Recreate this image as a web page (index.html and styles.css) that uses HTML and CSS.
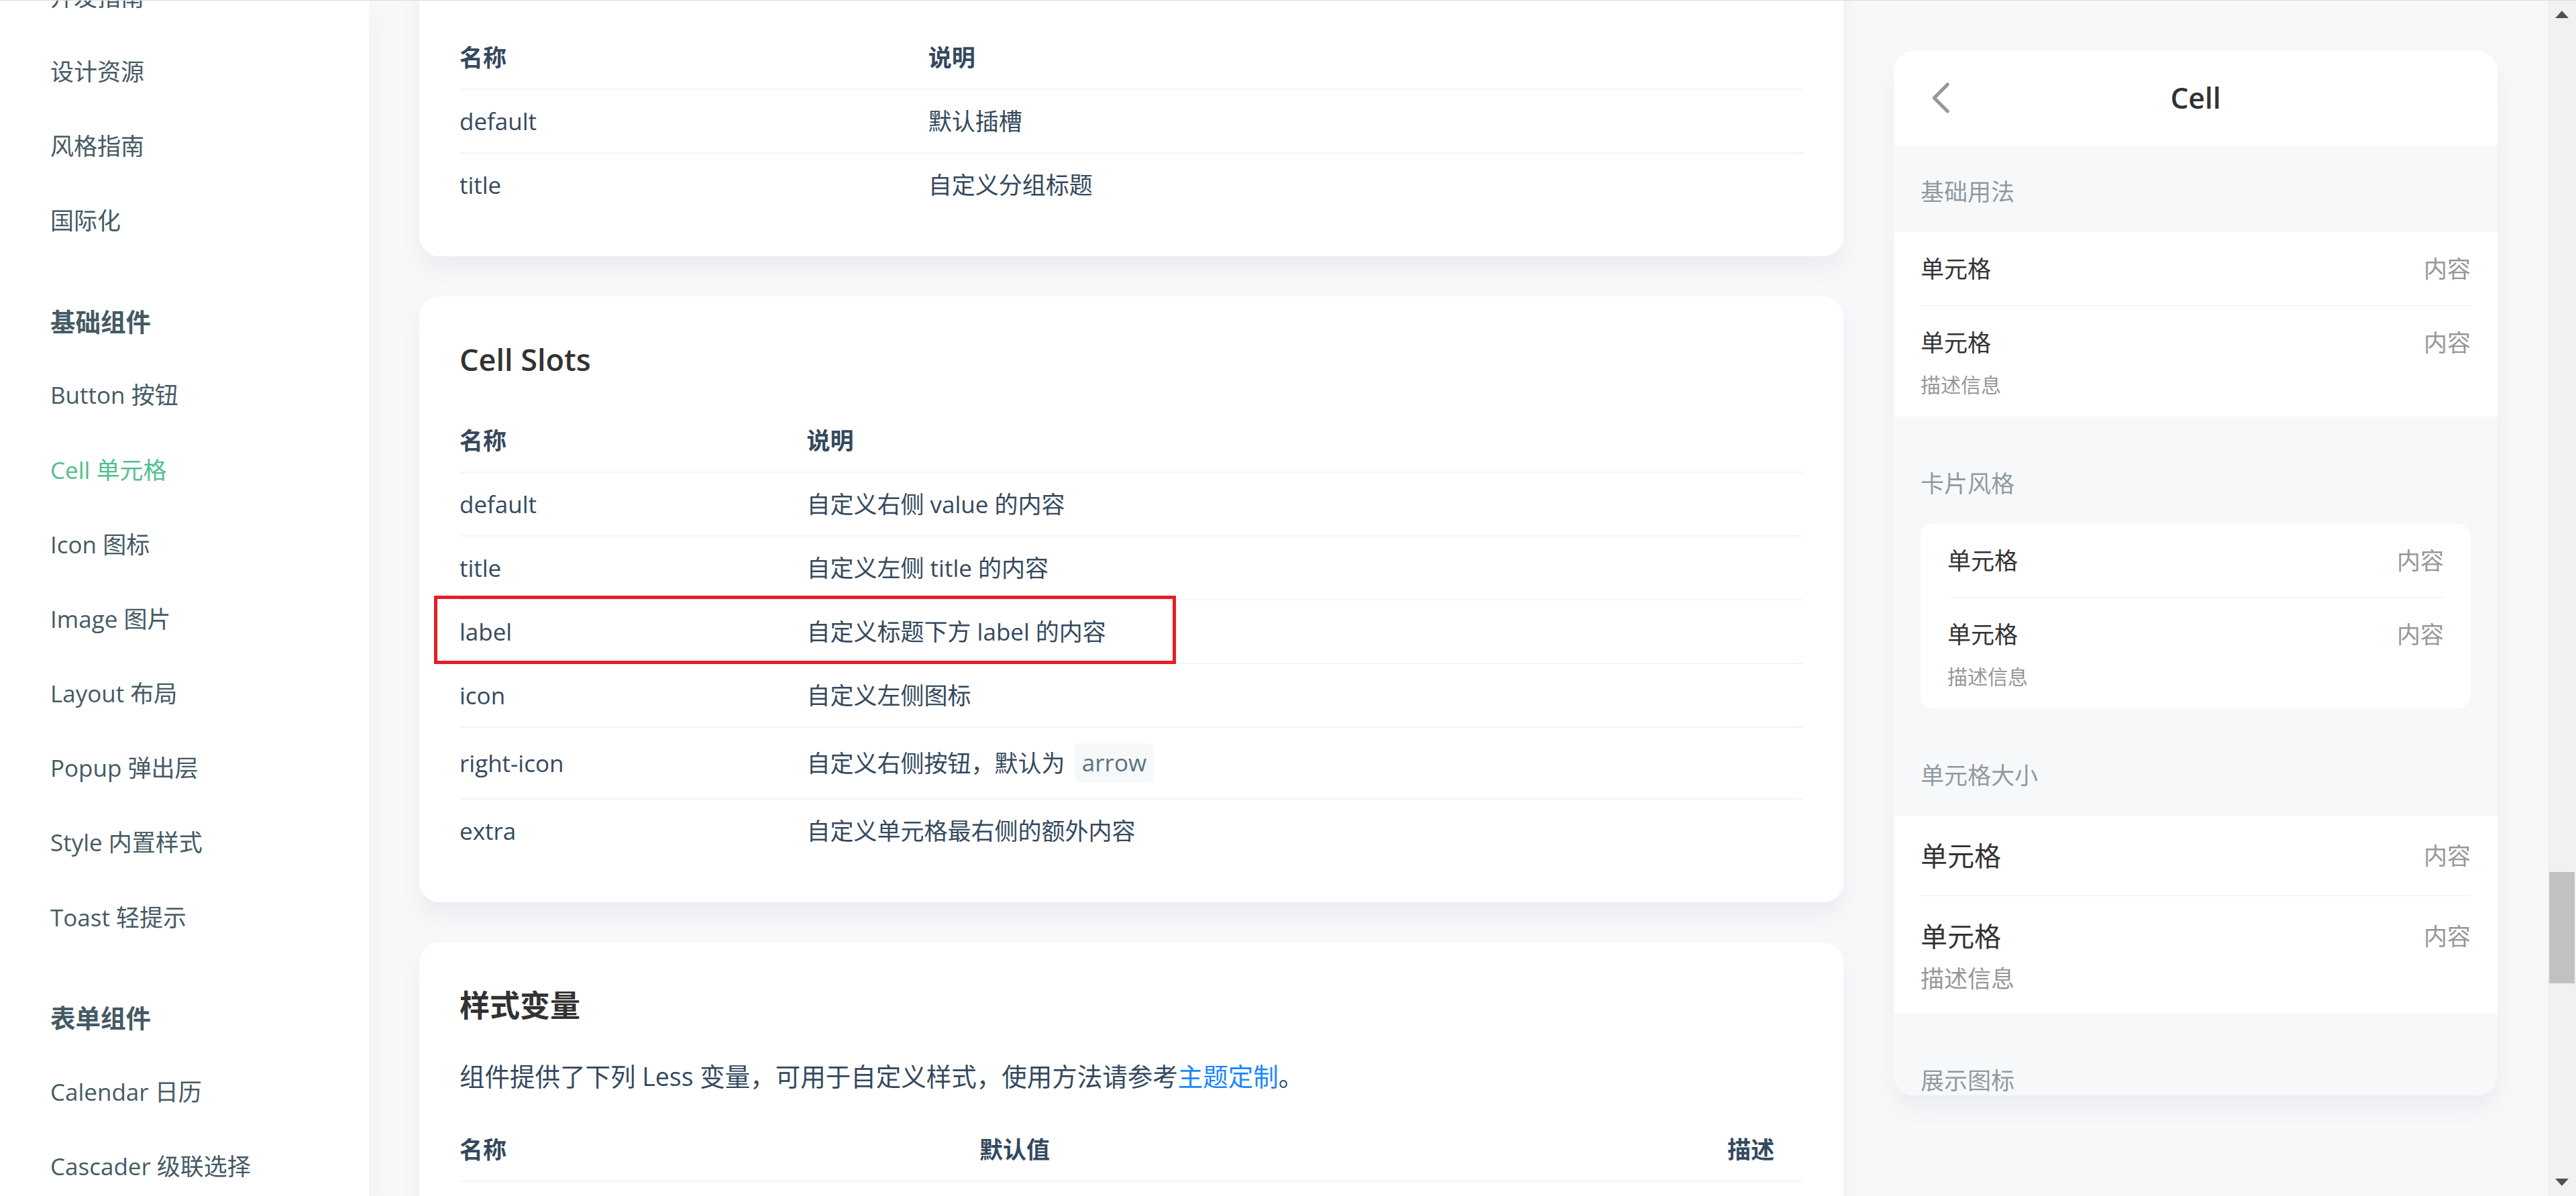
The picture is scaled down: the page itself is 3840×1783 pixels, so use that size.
FILE: index.html
```html
<!DOCTYPE html>
<html lang="zh-CN">
<head>
<meta charset="utf-8">
<title>Cell 单元格 - Vant</title>
<link rel="stylesheet" href="styles.css">
</head>
<body>
<div class="app">
  <div class="topline"></div>

  <aside class="nav">
    <div class="nav-list">
      <div class="nav-group">
        <a class="nav-item" href="#">开发指南</a>
        <a class="nav-item" href="#">设计资源</a>
        <a class="nav-item" href="#">风格指南</a>
        <a class="nav-item" href="#">国际化</a>
      </div>
      <div class="nav-group">
        <div class="nav-title">基础组件</div>
        <a class="nav-item" href="#">Button 按钮</a>
        <a class="nav-item active" href="#">Cell 单元格</a>
        <a class="nav-item" href="#">Icon 图标</a>
        <a class="nav-item" href="#">Image 图片</a>
        <a class="nav-item" href="#">Layout 布局</a>
        <a class="nav-item" href="#">Popup 弹出层</a>
        <a class="nav-item" href="#">Style 内置样式</a>
        <a class="nav-item" href="#">Toast 轻提示</a>
      </div>
      <div class="nav-group">
        <div class="nav-title">表单组件</div>
        <a class="nav-item" href="#">Calendar 日历</a>
        <a class="nav-item" href="#">Cascader 级联选择</a>
        <a class="nav-item" href="#">Checkbox 复选框</a>
      </div>
    </div>
  </aside>

  <main class="content">
    <section class="card">
      <h3>CellGroup Slots</h3>
      <table class="doc-table">
        <colgroup><col class="c-cg"><col></colgroup>
        <thead><tr><th>名称</th><th>说明</th></tr></thead>
        <tbody>
          <tr><td>default</td><td>默认插槽</td></tr>
          <tr><td>title</td><td>自定义分组标题</td></tr>
        </tbody>
      </table>
    </section>

    <section class="card">
      <h3>Cell Slots</h3>
      <table class="doc-table">
        <colgroup><col class="c-cs"><col></colgroup>
        <thead><tr><th>名称</th><th>说明</th></tr></thead>
        <tbody>
          <tr><td>default</td><td>自定义右侧 value 的内容</td></tr>
          <tr><td>title</td><td>自定义左侧 title 的内容</td></tr>
          <tr><td>label</td><td>自定义标题下方 label 的内容</td></tr>
          <tr><td>icon</td><td>自定义左侧图标</td></tr>
          <tr><td>right-icon</td><td>自定义右侧按钮，默认为 <code>arrow</code></td></tr>
          <tr><td>extra</td><td>自定义单元格最右侧的额外内容</td></tr>
        </tbody>
      </table>
      <div class="mark"></div>
    </section>

    <section class="card">
      <h3>样式变量</h3>
      <p>组件提供了下列 Less 变量，可用于自定义样式，使用方法请参考<a href="#">主题定制</a>。</p>
      <table class="doc-table">
        <colgroup><col class="c-v1"><col><col class="c-v3"></colgroup>
        <thead><tr><th>名称</th><th>默认值</th><th>描述</th></tr></thead>
        <tbody>
          <tr><td>--van-cell-font-size</td><td>var(--van-font-size-md)</td><td>-</td></tr>
          <tr><td>--van-cell-line-height</td><td>24px</td><td>-</td></tr>
        </tbody>
      </table>
    </section>
  </main>

  <div class="sim-col">
    <div class="sim">
      <div class="demo-nav">
        <svg class="demo-back" viewBox="0 0 1000 1000" aria-hidden="true"><path d="M296.114 508.035c-3.22-13.597.473-28.499 11.079-39.105l333.912-333.912c16.271-16.272 42.653-16.272 58.925 0s16.272 42.654 0 58.926L395.504 498.47l304.574 304.574c16.272 16.272 16.272 42.654 0 58.926s-42.654 16.272-58.926 0L307.241 528.058a41.472 41.472 0 0 1-11.127-20.023z"/></svg>
        <div class="demo-title">Cell</div>
      </div>
      <div class="demo-body">
        <div class="demo-block first">
          <h2 class="block-title">基础用法</h2>
          <div class="cell-group">
            <div class="cell"><div class="cell-title"><span>单元格</span></div><div class="cell-value">内容</div></div>
            <div class="cell"><div class="cell-title"><span>单元格</span><div class="cell-label">描述信息</div></div><div class="cell-value">内容</div></div>
          </div>
        </div>
        <div class="demo-block">
          <h2 class="block-title">卡片风格</h2>
          <div class="cell-group inset">
            <div class="cell"><div class="cell-title"><span>单元格</span></div><div class="cell-value">内容</div></div>
            <div class="cell"><div class="cell-title"><span>单元格</span><div class="cell-label">描述信息</div></div><div class="cell-value">内容</div></div>
          </div>
        </div>
        <div class="demo-block">
          <h2 class="block-title">单元格大小</h2>
          <div class="cell-group">
            <div class="cell large"><div class="cell-title"><span>单元格</span></div><div class="cell-value">内容</div></div>
            <div class="cell large"><div class="cell-title"><span>单元格</span><div class="cell-label">描述信息</div></div><div class="cell-value">内容</div></div>
          </div>
        </div>
        <div class="demo-block">
          <h2 class="block-title">展示图标</h2>
          <div class="cell-group">
            <div class="cell"><div class="cell-title"><span>单元格</span></div><div class="cell-value">内容</div></div>
          </div>
        </div>
      </div>
    </div>
  </div>

  <div class="scrollbar">
    <div class="sb-btn"><svg class="sb-arrow" viewBox="0 0 8 4.4"><polygon points="0,4.4 4,0 8,4.4"/></svg></div>
    <div class="sb-track"><div class="sb-thumb"></div></div>
    <div class="sb-btn"><svg class="sb-arrow" viewBox="0 0 8 4.4"><polygon points="0,0 8,0 4,4.4"/></svg></div>
  </div>
</div>
</body>
</html>
```

FILE: styles.css
```css
html {
  zoom: 2.5;
}

body {
  margin: 0;
  background: #f7f8fa;
  font-family: "Open Sans", "Noto Sans CJK SC", sans-serif;
  overflow: hidden;
}

.app {
  position: relative;
  display: flex;
  height: 713.2px;
  overflow: hidden;
  background: #f7f8fa;
}

.topline {
  position: absolute;
  left: 0;
  right: 0;
  top: 0;
  border-top: 0.4px solid #d9dbde;
  z-index: 10;
}

/* ---------- sidebar ---------- */
.nav {
  flex: none;
  width: 220px;
  background: #fff;
  box-shadow: 0 8px 12px #ebedf0;
  position: relative;
  z-index: 2;
  overflow: hidden;
}

.nav-list {
  margin-top: -24.2px;
}

.nav-group + .nav-group {
  margin-top: 16.66px;
}

.nav-title {
  padding: 8px 0 8px 30px;
  font-size: 15px;
  line-height: 27px;
  font-weight: 600;
  color: #455a64;
}

.nav-item {
  display: block;
  padding: 12px 0 12px 30px;
  font-size: 14px;
  line-height: 20.47px;
  color: #455a64;
  text-decoration: none;
}

.nav-item.active {
  color: #4fc08d;
}

/* ---------- content ---------- */
.content {
  flex: 1;
  min-width: 0;
  padding: 0 0 0 30px;
}

.card {
  position: relative;
  margin-bottom: 24px;
  padding: 24px;
  background: #fff;
  border-radius: 12px;
  box-shadow: 0 8px 12px #ebedf0;
}

.card:first-child {
  margin-top: -51.4px;
}

.card h3 {
  margin: 0 0 16px;
  font-size: 18px;
  line-height: 27px;
  font-weight: 600;
  color: #323233;
}

.card p {
  margin: 16px 0 12px;
  font-size: 15px;
  line-height: 26px;
  color: #34495e;
}

.card p a {
  color: #1989fa;
  text-decoration: none;
}

.doc-table {
  width: 100%;
  margin-top: 12px;
  table-layout: fixed;
  border-collapse: collapse;
  font-size: 14px;
  line-height: 21.2px;
  color: #34495e;
}

.doc-table th {
  padding: 8px 16px;
  text-align: left;
  font-weight: 600;
}

.doc-table td {
  padding: 8px 16px;
  border-top: 1px solid #f1f4f8;
  white-space: nowrap;
}

.doc-table th:first-child,
.doc-table td:first-child {
  padding-left: 0;
}

.c-cg { width: 263.5px; }
.c-cs { width: 191px; }
.c-v1 { width: 294px; }
.c-v3 { width: 61.2px; }

.doc-table code {
  display: inline-block;
  margin: 1.5px 2px;
  padding: 0 4.5px;
  font-family: "Open Sans", "Noto Sans CJK SC", sans-serif;
  font-size: 14px;
  line-height: 23px;
  color: #58727e;
  background: #f7f8fa;
  border-radius: 3px;
}

.mark {
  position: absolute;
  left: 8.8px;
  top: 178.2px;
  width: 442.4px;
  height: 40.8px;
  box-sizing: border-box;
  border: 2.2px solid #e71d25;
  pointer-events: none;
}

/* ---------- simulator ---------- */
.sim-col {
  flex: none;
  width: 360px;
  margin: 0 30px;
  padding-top: 30.4px;
}

.sim {
  height: 622.6px;
  border-radius: 12px;
  overflow: hidden;
  background: #f7f8fa;
  box-shadow: 0 8px 12px #ebedf0;
}

.demo-nav {
  position: relative;
  height: 56px;
  background: #fff;
  text-align: center;
}

.demo-back {
  position: absolute;
  left: 16px;
  top: 16px;
  width: 24px;
  height: 24px;
  fill: #969799;
}

.demo-title {
  font-size: 17px;
  line-height: 56px;
  font-weight: 600;
  color: #323233;
}

.block-title {
  margin: 0;
  padding: 32px 16px 16px;
  font-size: 14px;
  line-height: 16px;
  font-weight: 400;
  color: rgba(69, 90, 100, 0.6);
}

.demo-block.first .block-title {
  padding-top: 20px;
}

.cell-group {
  background: #fff;
}

.cell-group.inset {
  margin: 0 16px;
  border-radius: 8px;
  overflow: hidden;
}

.cell {
  position: relative;
  display: flex;
  padding: 10px 16px;
  font-size: 14px;
  line-height: 24px;
  color: #323233;
  background: #fff;
}

.cell:not(:last-child)::after {
  content: "";
  position: absolute;
  left: 16px;
  right: 16px;
  bottom: 0;
  border-bottom: 0.5px solid #ebedf0;
}

.cell-title {
  flex: 1;
}

.cell-value {
  flex: 1;
  text-align: right;
  color: #969799;
}

.cell-label {
  margin-top: 4px;
  font-size: 12px;
  line-height: 18px;
  color: #969799;
}

.cell.large {
  padding-top: 12px;
  padding-bottom: 12px;
}

.cell.large .cell-title {
  font-size: 16px;
}

.cell.large .cell-label {
  font-size: 14px;
}

/* ---------- scrollbar ---------- */
.scrollbar {
  flex: none;
  width: 16.8px;
  display: flex;
  flex-direction: column;
  background: #f1f1f1;
}

.sb-btn {
  flex: none;
  height: 16.8px;
  display: flex;
  align-items: center;
  justify-content: center;
}

.sb-arrow {
  width: 8px;
  height: 4.4px;
  fill: #505050;
}

.sb-track {
  flex: 1;
  position: relative;
}

.sb-thumb {
  position: absolute;
  left: 0.8px;
  right: 0.8px;
  top: 503.2px;
  height: 66.4px;
  background: #c1c1c1;
}
```
